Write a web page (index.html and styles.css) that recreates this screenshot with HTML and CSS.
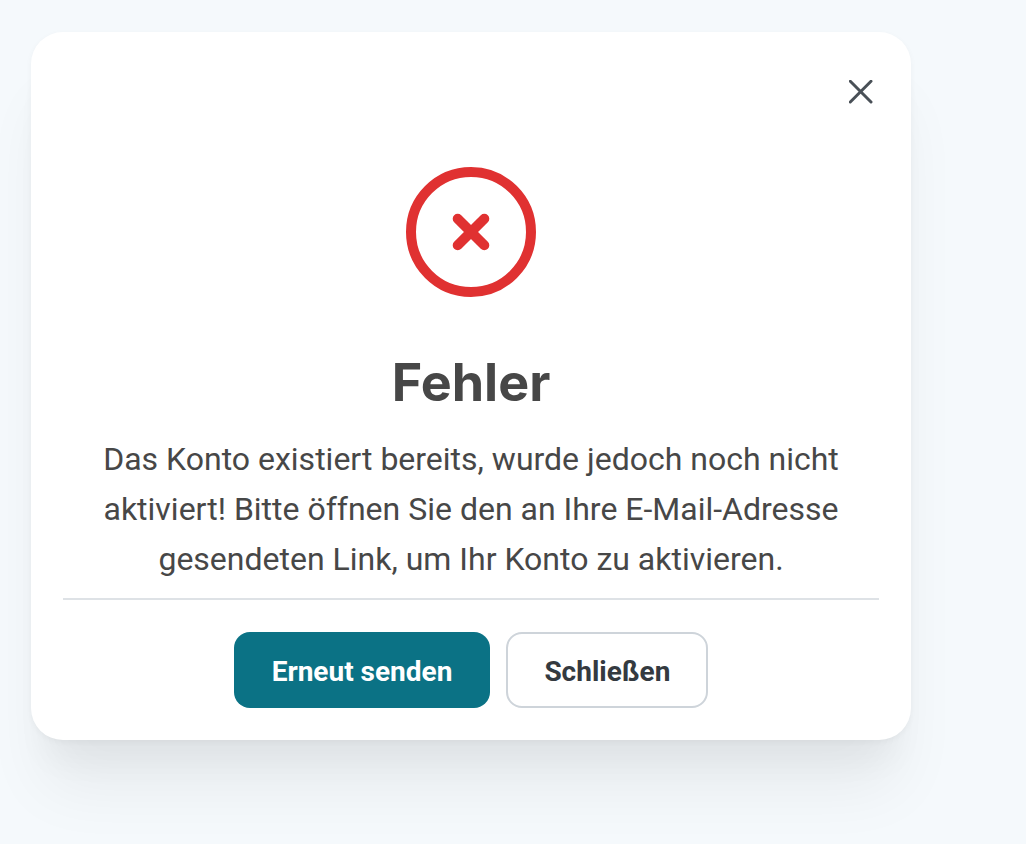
FILE: index.html
```html
<!DOCTYPE html>
<html lang="de">
<head>
<meta charset="utf-8">
<meta name="viewport" content="width=device-width, initial-scale=1">
<title>Fehler</title>
<link rel="stylesheet" href="styles.css">
</head>
<body>
<main class="dialog" role="dialog" aria-labelledby="dialog-title" aria-describedby="dialog-text">
  <header class="dialog-header">
    <button class="close" type="button" aria-label="Dialog schließen">
      <svg viewBox="0 0 24 24" width="24" height="24" aria-hidden="true"><path d="M1.300 1.300 22 22M22 1.300 1.300 22"/></svg>
    </button>
  </header>
  <div class="dialog-body">
    <svg class="status" viewBox="0 0 130 130" width="130" height="130" aria-hidden="true">
      <circle cx="65" cy="65" r="60"/>
      <path d="M51.700 51.700 78.300 78.300M78.300 51.700 51.700 78.300"/>
    </svg>
    <h1 class="title" id="dialog-title">Fehler</h1>
    <p class="message" id="dialog-text">Das Konto existiert bereits, wurde jedoch noch nicht aktiviert! Bitte öffnen Sie den an Ihre E-Mail-Adresse gesendeten Link, um Ihr Konto zu aktivieren.</p>
  </div>
  <footer class="actions">
    <button class="button button-primary" type="button">Erneut senden</button>
    <button class="button button-secondary" type="button">Schließen</button>
  </footer>
</main>
</body>
</html>
```
FILE: styles.css
```css
* {
  box-sizing: border-box;
}

body {
  min-height: 100vh;
  margin: 0;
  padding: 32px 115px 104px 31px;
  background: #f5f9fc;
  color: #474747;
  font-family: Roboto, "Liberation Sans", sans-serif;
}

.dialog {
  padding: 32px;
  border-radius: 32px;
  background: #fff;
  box-shadow:
    0 2px 6px rgba(0, 0, 0, 0.04),
    0 60px 64px -12px rgba(0, 0, 0, 0.06),
    0 34px 34px -14px rgba(0, 0, 0, 0.04);
}

.dialog-header {
  display: flex;
  justify-content: flex-end;
}

.close {
  display: flex;
  padding: 16px 6px;
  border: 0;
  background: transparent;
  cursor: pointer;
}

.close svg {
  fill: none;
  stroke: #495057;
  stroke-width: 3;
  stroke-linecap: round;
}

.dialog-body {
  display: flex;
  flex-direction: column;
  align-items: center;
  padding: 47px 32px 14px;
  border-bottom: 2px solid #dee2e6;
  text-align: center;
}

.status {
  fill: none;
  stroke: #e03131;
  stroke-width: 10;
  stroke-linecap: round;
}

.title {
  margin: 50px 0 15px;
  font-family: Inter, sans-serif;
  font-size: 52px;
  font-weight: 700;
  line-height: 72px;
}

.message {
  margin: 0;
  font-size: 32px;
  line-height: 50px;
}

.actions {
  display: flex;
  flex-wrap: wrap;
  justify-content: center;
  gap: 16px;
  padding-top: 32px;
}

.button {
  height: 76px;
  padding: 4px 36px 0;
  border: 2px solid transparent;
  border-radius: 16px;
  font: 700 28px/40px Roboto, sans-serif;
  cursor: pointer;
}

.button-primary {
  background: #0b7285;
  color: #fff;
}

.button-secondary {
  border-color: #ced4da;
  background: #fff;
  color: #343a40;
}
```
